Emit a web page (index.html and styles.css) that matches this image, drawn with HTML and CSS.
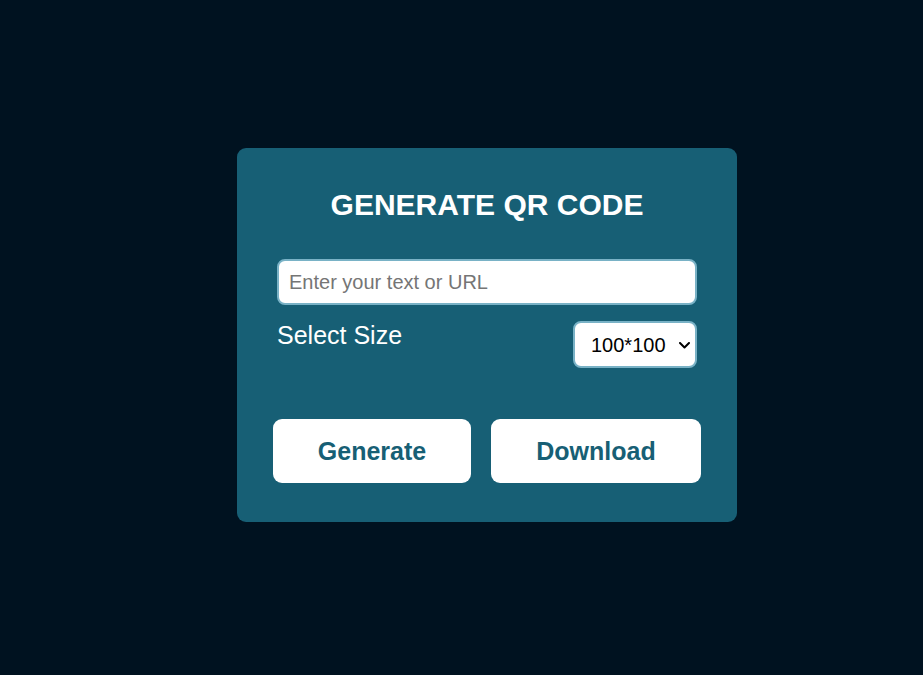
FILE: index.html
```html
<!DOCTYPE html>
<html lang="en">
<head>
<meta charset="utf-8">
<title>QR Code Generator</title>
<link rel="stylesheet" href="styles.css">
</head>
<body>
<main class="page">
  <section class="card">
    <h1 class="title">GENERATE QR CODE</h1>
    <input class="text-input" type="text" placeholder="Enter your text or URL">
    <div class="size-row">
      <label class="size-label" for="size">Select Size</label>
      <div class="select-wrap">
        <select class="size-select" id="size">
          <option>100*100</option>
          <option>200*200</option>
          <option>300*300</option>
        </select>
        <svg class="chevron" width="11" height="7" viewBox="0 0 11 7" aria-hidden="true">
          <path d="M1 1 L5.5 5.5 L10 1" fill="none" stroke="#000" stroke-width="2" stroke-linecap="round" stroke-linejoin="round"/>
        </svg>
      </div>
    </div>
    <div class="actions">
      <button class="btn btn-generate" type="button">Generate</button>
      <button class="btn btn-download" type="button">Download</button>
    </div>
  </section>
</main>
</body>
</html>
```
FILE: styles.css
```css
* { box-sizing: border-box; }
html, body { margin: 0; padding: 0; }
body {
  background: #001220;
  font-family: "Liberation Sans", Arial, sans-serif;
  width: 923px;
  height: 675px;
  overflow: hidden;
}
.page {
  padding-top: 148px;
  padding-left: 237px;
}
.card {
  width: 500px;
  height: 374px;
  background: #175f75;
  border-radius: 9px;
  padding: 40px 40px 40px;
  display: flex;
  flex-direction: column;
}
.title {
  margin: 0 0 37px;
  color: #ffffff;
  font-size: 30px;
  line-height: 34px;
  height: 34px;
  font-weight: bold;
  text-align: center;
  flex: none;
}
.text-input {
  flex: none;
  display: block;
  width: 420px;
  height: 46px;
  border: 2px solid #79b2c6;
  border-radius: 8px;
  padding: 0 10px;
  margin: 0;
  font-family: "Liberation Sans", Arial, sans-serif;
  font-size: 20px;
  color: #000;
  background: #fff;
  outline: none;
}
.text-input::placeholder { color: #757575; }
.size-row {
  flex: none;
  margin-top: 16px;
  display: flex;
  justify-content: space-between;
  align-items: flex-start;
}
.size-label {
  color: #ffffff;
  font-size: 25px;
  line-height: 29px;
}
.select-wrap {
  position: relative;
  width: 124px;
  height: 47px;
}
.size-select {
  display: block;
  width: 124px;
  height: 47px;
  margin: 0;
  border: 2px solid #79b2c6;
  border-radius: 8px;
  padding: 0 24px 0 16px;
  font-family: "Liberation Sans", Arial, sans-serif;
  font-size: 20px;
  color: #000;
  background: #fff;
  outline: none;
  appearance: none;
  -webkit-appearance: none;
}
.chevron {
  position: absolute;
  right: 7px;
  top: 21px;
  pointer-events: none;
}
.actions {
  flex: none;
  margin-top: 51px;
  display: flex;
  justify-content: center;
  gap: 20px;
  margin-left: -10px;
  margin-right: -10px;
}
.btn {
  height: 64px;
  border: none;
  border-radius: 9px;
  background: #ffffff;
  color: #175f75;
  font-family: "Liberation Sans", Arial, sans-serif;
  font-size: 25px;
  font-weight: bold;
  cursor: pointer;
  padding: 0;
}
.btn-generate { width: 198px; }
.btn-download { width: 210px; }
```
